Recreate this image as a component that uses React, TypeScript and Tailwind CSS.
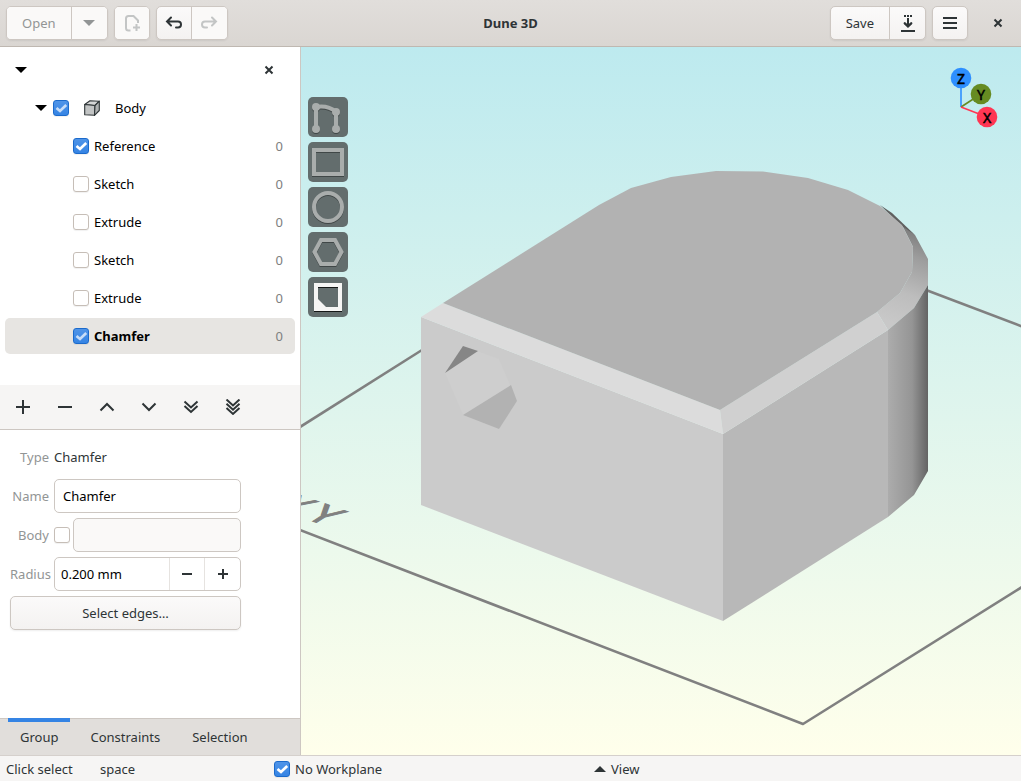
import React from "react";

type CheckProps = {
  label?: string;
  ariaLabel?: string;
  checked?: boolean;
  dim?: boolean;
  bold?: boolean;
};

function Check({ label, ariaLabel, checked = false, dim = false, bold = false }: CheckProps) {
  return (
    <label className={bold ? "flex items-center gap-[5px] font-bold" : "flex items-center gap-[5px]"}>
      <span className="grid size-4 shrink-0">
        <input
          type="checkbox"
          defaultChecked={checked}
          aria-label={ariaLabel}
          className="peer col-start-1 row-start-1 size-4 appearance-none rounded-[3px] border border-[#c6beb7] bg-white shadow-[0_1px_1px_rgba(0,0,0,0.06)] checked:border-[#1b6acb] checked:bg-linear-to-b checked:from-[#4f94e8] checked:to-[#3584e4]"
        />
        <svg
          viewBox="0 0 16 16"
          className={
            dim
              ? "pointer-events-none invisible col-start-1 row-start-1 size-4 opacity-70 peer-checked:visible"
              : "pointer-events-none invisible col-start-1 row-start-1 size-4 peer-checked:visible"
          }
        >
          <path d="M3.5 8 L7 11 L13.2 5" fill="none" stroke="white" strokeWidth="2.7" />
        </svg>
      </span>
      {label && <span>{label}</span>}
    </label>
  );
}

function Caret({ up = false, className = "text-black" }: { up?: boolean; className?: string }) {
  return (
    <svg viewBox="0 0 12 6" className={`h-[6px] w-3 ${className}`} fill="currentColor">
      {up ? <path d="M0 6 L6 0 L12 6Z" /> : <path d="M0 0 H12 L6 6Z" />}
    </svg>
  );
}

function Glyph({ d, width = 2 }: { d: string; width?: number }) {
  return (
    <svg viewBox="0 0 16 16" className="size-4 shrink-0" fill="none" stroke="currentColor" strokeWidth={width}>
      <path d={d} />
    </svg>
  );
}

const CLOSE = "M4.5 4.5 L11.5 11.5 M11.5 4.5 L4.5 11.5";

const group =
  "flex h-[34px] divide-x divide-[#cdc7c2] overflow-hidden rounded-[5px] border border-[#cdc7c2] bg-linear-to-b from-[#fbfafa] to-[#f4f2f1] shadow-[0_1px_2px_rgba(0,0,0,0.07)]";
const cell = "flex w-[35px] items-center justify-center disabled:bg-[#faf9f8] disabled:text-[#c3c5c5]";

function HeaderBar() {
  return (
    <header className="grid h-[47px] grid-cols-[1fr_auto_1fr] items-center border-b border-[#bfb8b1] bg-linear-to-b from-[#e1dedb] to-[#dad6d2] px-[6px]">
      <div className="flex gap-[6px]">
        <div className={group}>
          <button disabled className="px-[15px] disabled:bg-[#faf9f8] disabled:text-[#929595]">Open</button>
          <button disabled aria-label="Recent files" className={cell}>
            <Caret className="text-[#929595]" />
          </button>
        </div>
        <div className={group}>
          <button disabled aria-label="New document" className="flex w-[34px] items-center justify-center bg-[#faf9f8] text-[#c3c5c5]">
            <svg viewBox="0 0 16 18" className="h-[18px] w-4" fill="none" stroke="currentColor" strokeWidth="2">
              <path d="M6.500 16.500 H4.500 Q2 16.500 2 14 V4.500 Q2 2 4.500 2 H9.500 L14 6.500 V9" />
              <path d="M12.500 10 V17 M9 13.500 H16" />
            </svg>
          </button>
        </div>
        <div className={group}>
          <button aria-label="Undo" className={cell}>
            <svg viewBox="0 0 18 16" className="h-4 w-[18px]" fill="none" stroke="currentColor" strokeWidth="2">
              <path d="M6 2.5 L2 6.5 L6 10.5 M2 6.5 H13 Q16 6.5 16 9.5 Q16 12.5 13 12.5 H11" strokeLinecap="round" />
            </svg>
          </button>
          <button disabled aria-label="Redo" className={cell}>
            <svg viewBox="0 0 18 16" className="h-4 w-[18px]" fill="none" stroke="currentColor" strokeWidth="2">
              <path d="M12 2.5 L16 6.5 L12 10.5 M16 6.5 H5 Q2 6.5 2 9.5 Q2 12.5 5 12.5 H7" strokeLinecap="round" />
            </svg>
          </button>
        </div>
      </div>
      <h1 className="font-bold">Dune 3D</h1>
      <div className="flex items-center justify-end gap-[6px]">
        <div className={group}>
          <button className="px-[15px]">Save</button>
          <button aria-label="Save as" className={cell}>
            <svg viewBox="0 0 16 18" className="h-[18px] w-4" fill="none" stroke="currentColor" strokeWidth="2">
              <path d="M4 2 H6 M7 2 H9 M10 2 H12 M8 4 V12 M1 17 H15" />
              <path d="M4.8 9.3 L8 12.3 L11.2 9.3" strokeWidth="2.400" strokeLinecap="round" />
            </svg>
          </button>
        </div>
        <div className={group}>
          <button aria-label="Menu" className="flex w-[34px] items-center justify-center">
            <Glyph d="M1 3 H15 M1 8 H15 M1 13 H15" />
          </button>
        </div>
        <button aria-label="Close window" className="flex h-[34px] w-[41px] items-center pl-4">
          <Glyph d={CLOSE} />
        </button>
      </div>
    </header>
  );
}

const steps = [
  { name: "Reference", checked: true },
  { name: "Sketch" },
  { name: "Extrude" },
  { name: "Sketch" },
  { name: "Extrude" },
  { name: "Chamfer", checked: true, dim: true, selected: true },
];

function Tree() {
  return (
    <ul className="flex flex-col gap-[2px] p-[5px] pb-[31px] text-black">
      <li className="flex h-9 items-center justify-between pl-[10px] pr-[18px]">
        <button aria-label="Collapse document"><Caret /></button>
        <button aria-label="Close document" className="text-[#2e3436]"><Glyph d={CLOSE} /></button>
      </li>
      <li className="flex h-9 items-center pl-[30px]">
        <button aria-label="Collapse body" className="mr-[6px]"><Caret /></button>
        <Check checked dim ariaLabel="Show body" />
        <svg viewBox="0 0 16 16" className="mx-[15px] size-4" stroke="#2e3436" strokeWidth="1.1" strokeLinejoin="round">
          <path d="M0.7 4.5 L6 0.7 L15.3 1.2 L11 5.500Z" fill="#d5d6d6" />
          <path d="M0.7 4.5 L11 5.500 L10.5 15.3 L0.7 14.800Z" fill="#c2c4c4" />
          <path d="M11 5.500 L15.3 1.2 V10.5 L10.5 15.3Z" fill="#aeb1b1" />
        </svg>
        <span>Body</span>
      </li>
      {steps.map((s, i) => (
        <li
          key={i}
          className={
            s.selected
              ? "flex h-9 items-center justify-between rounded-[5px] bg-[#e7e5e2] pl-[68px] pr-3"
              : "flex h-9 items-center justify-between pl-[68px] pr-3"
          }
        >
          <Check label={s.name} checked={s.checked} dim={s.dim} bold={s.selected} />
          <span className="text-[#7e8080]">0</span>
        </li>
      ))}
    </ul>
  );
}

const tools = [
  { name: "Add", d: "M8 1 V15 M1 8 H15" },
  { name: "Remove", d: "M1 8 H15" },
  { name: "Move up", d: "M1.5 11.5 L8 5 L14.5 11.5" },
  { name: "Move down", d: "M1.5 4.5 L8 11 L14.5 4.5" },
  { name: "Move to end of body", d: "M1.5 2.5 L8 8.5 L14.5 2.5 M1.5 7 L8 13 L14.5 7" },
  { name: "Move to end", d: "M1.5 0.5 L8 6.5 L14.5 0.5 M1.5 4.7 L8 10.7 L14.5 4.7 M1.5 8.9 L8 14.9 L14.5 8.9" },
];

const field = "h-[34px] w-full min-w-0 rounded-[5px] border border-[#cdc7c2] bg-white text-black";

function Properties() {
  return (
    <form className="grid w-[251px] flex-1 auto-rows-[34px] grid-cols-[39px_1fr] content-start items-center gap-[5px] p-[10px]">
      <span className="text-right text-[#929595]">Type</span>
      <span>Chamfer</span>
      <label htmlFor="name" className="text-right text-[#929595]">Name</label>
      <input id="name" defaultValue="Chamfer" className={`${field} px-2`} />
      <label htmlFor="body" className="text-right text-[#929595]">Body</label>
      <div className="flex items-center gap-[3px]">
        <Check ariaLabel="Starts body" />
        <input id="body" disabled className="h-[34px] w-full min-w-0 rounded-[5px] border border-[#cdc7c2] bg-[#faf9f8] px-2" />
      </div>
      <label htmlFor="radius" className="text-right text-[#929595]">Radius</label>
      <div className={`${field} flex divide-x divide-[#e6e3e0] overflow-hidden`}>
        <input id="radius" defaultValue="0.200 mm" className="min-w-0 flex-1 pl-[6px]" />
        <button type="button" aria-label="Decrease" className="flex w-[35px] items-center justify-center text-[#2e3436]">
          <Glyph d="M3 8 H13" />
        </button>
        <button type="button" aria-label="Increase" className="flex w-[35px] items-center justify-center text-[#2e3436]">
          <Glyph d="M3 8 H13 M8 3 V13" />
        </button>
      </div>
      <button
        type="button"
        className="col-span-2 h-[34px] rounded-[5px] border border-[#cdc7c2] bg-linear-to-b from-[#fbfafa] to-[#f4f2f1] shadow-[0_1px_2px_rgba(0,0,0,0.07)]"
      >
        Select edges…
      </button>
    </form>
  );
}

function Sidebar() {
  return (
    <aside className="flex w-[301px] shrink-0 flex-col border-r border-[#cdc7c2] bg-white">
      <Tree />
      <div className="flex h-[45px] items-center gap-[26px] border-b border-[#cdc7c2] bg-[#f6f5f4] px-[15px]">
        {tools.map((t) => (
          <button key={t.name} aria-label={t.name}><Glyph d={t.d} /></button>
        ))}
      </div>
      <Properties />
      <nav className="flex h-[37px] gap-2 border-t border-[#cdc7c2] bg-[#e1dedb] px-2">
        <button className="-mt-px border-t-4 border-[#3584e4] px-3 pb-1">Group</button>
        <button className="px-3">Constraints</button>
        <button className="px-3">Selection</button>
      </nav>
    </aside>
  );
}

function Scene() {
  return (
    <svg
      viewBox="301 47 720 708"
      preserveAspectRatio="xMidYMid slice"
      className="absolute inset-0 size-full"
      role="img"
      aria-label="Chamfered body"
    >
      <defs>
        <linearGradient id="sky" x1="0" y1="0" x2="0" y2="1">
          <stop offset="0" stopColor="#bdeaef" />
          <stop offset="1" stopColor="#ffffeb" />
        </linearGradient>
        <linearGradient id="side" gradientUnits="userSpaceOnUse" x1="888" y1="0" x2="928" y2="0">
          <stop offset="0" stopColor="#acacac" />
          <stop offset="0.6" stopColor="#959595" />
          <stop offset="1" stopColor="#646464" />
        </linearGradient>
        <linearGradient id="bevel" gradientUnits="userSpaceOnUse" x1="890" y1="322" x2="926" y2="222">
          <stop offset="0" stopColor="#c8c8c8" />
          <stop offset="0.3" stopColor="#bdbdbd" />
          <stop offset="0.65" stopColor="#9d9d9d" />
          <stop offset="1" stopColor="#6e6e6e" />
        </linearGradient>
      </defs>
      <rect x="301" y="47" width="720" height="708" fill="url(#sky)" />
      <g fill="none" stroke="#808080" strokeWidth="2.6" strokeLinejoin="round">
        <path d="M300 427 L422 350" />
        <path d="M926 290 L1022 326.500" />
        <path d="M300 530 L803 724 L1022 587" />
      </g>
      <text x="-3 11.6" transform="matrix(2 0.7 -1.55 1 280 510)" fontSize="20" fill="#808080" stroke="#808080" strokeWidth="0.6">
        XY
      </text>

      <path d="M880 206 L915 235 L928 259 V285 L914 308 L888 330 L877 312 L900 293 L912 272 L913 247 L902 225Z" fill="url(#bevel)" />
      <path d="M880 205 L892 213 L915 235 L902 226Z" fill="#606060" />
      <path d="M888 330 L914 308 L928 285 V471 L914 495 L888 517Z" fill="url(#side)" />
      <path d="M723 434 L888 330 V517 L723 621Z" fill="#b8b8b8" />
      <path d="M421 317 L723 434 V621 L421 505Z" fill="#cbcbcb" />
      <path d="M421 317 L443 303 L720 410 L723 434Z" fill="#dcdcdc" />
      <path d="M720 410 L877 312 L888 330 L723 434Z" fill="#d0d0d0" />
      <path
        d="M443 303 L599 205 L631 188 L671 177 L716 171 L763 171.500 L808 178 L848 190 L880 206 L902 225 L913 247 L912 272 L900 293 L877 312 L720 410Z"
        fill="#b2b2b2"
      />
      <path d="M463 346 L499 359 L517 401 L499 429 L463 415 L445 373Z" fill="#cecece" />
      <path d="M463 346 L478 351 L445 373Z" fill="#868686" />
      <path d="M463 415 L511 385 L517 401 L499 429Z" fill="#b2b2b2" />
    </svg>
  );
}

function AxisGizmo() {
  return (
    <svg viewBox="948 66 52 64" className="absolute right-[21px] top-[19px] h-16 w-[52px]" fontSize="14" textAnchor="middle">
      <g strokeWidth="1.6">
        <path d="M961 107 V80" stroke="#2d8fff" />
        <path d="M961 107 L981 94" stroke="#668b22" />
        <path d="M961 107 L987 117" stroke="#ff3653" />
      </g>
      <circle cx="961" cy="78" r="10.300" fill="#2d8fff" />
      <circle cx="981" cy="94" r="10.300" fill="#668b22" />
      <circle cx="987" cy="117" r="10.300" fill="#ff3653" />
      <g stroke="#000000" strokeWidth="0.5">
        <text x="961" y="84">Z</text>
        <text x="981" y="100">Y</text>
        <text x="987" y="123">X</text>
      </g>
    </svg>
  );
}

const drawTools = [
  {
    name: "Contour",
    icon: (
      <>
        <path d="M8 32 V10 Q20 8 28 15 V32" />
        <g fill="currentColor" stroke="none">
          <circle cx="8" cy="10" r="4" />
          <circle cx="28" cy="15" r="4" />
          <circle cx="8" cy="32" r="4" />
          <circle cx="28" cy="32" r="4" />
        </g>
      </>
    ),
  },
  { name: "Rectangle", icon: <rect x="6" y="8" width="28" height="24" /> },
  { name: "Circle", icon: <circle cx="20" cy="20" r="14" /> },
  { name: "Polygon", icon: <path d="M6.500 20 L13 8 H27 L33.500 20 L27 32 H13Z" /> },
  {
    name: "Chamfer",
    active: true,
    icon: (
      <>
        <rect x="8" y="8" width="24" height="24" />
        <path d="M9 21 L19 31 H9Z" fill="currentColor" stroke="none" />
      </>
    ),
  },
];

function Viewport() {
  return (
    <main className="relative min-w-0 flex-1 overflow-hidden">
      <Scene />
      <div className="absolute left-[7px] top-[50px] flex flex-col gap-[5px]">
        {drawTools.map((t) => (
          <button
            key={t.name}
            aria-label={t.name}
            className={
              t.active
                ? "size-10 rounded-[5px] bg-[#636d6d] text-[#f6f5f4]"
                : "size-10 rounded-[5px] bg-[#636d6d] text-[#a9adac]"
            }
          >
            <svg
              viewBox="0 0 40 40"
              className={
                t.active
                  ? "size-10 drop-shadow-[0_1px_0_rgba(0,0,0,0.8)]"
                  : "size-10 drop-shadow-[0_1px_0_rgba(0,0,0,0.35)]"
              }
              fill="none"
              stroke="currentColor"
              strokeWidth="4"
            >
              {t.icon}
            </svg>
          </button>
        ))}
      </div>
      <AxisGizmo />
    </main>
  );
}

function StatusBar() {
  return (
    <footer className="grid h-[26px] grid-cols-[94px_174px_320px_1fr] items-center border-t border-[#d5d0cc] bg-[#f6f5f4] px-[6px]">
      <span>Click select</span>
      <span>space</span>
      <Check label="No Workplane" checked />
      <button className="flex items-center gap-[5px]">
        <Caret up className="text-[#2e3436]" />
        View
      </button>
    </footer>
  );
}

export default function App() {
  return (
    <div className="flex min-h-screen flex-col bg-white font-['Noto_Sans',sans-serif] text-[13px] leading-[18px] text-[#2e3436]">
      <HeaderBar />
      <div className="flex flex-1">
        <Sidebar />
        <Viewport />
      </div>
      <StatusBar />
    </div>
  );
}
